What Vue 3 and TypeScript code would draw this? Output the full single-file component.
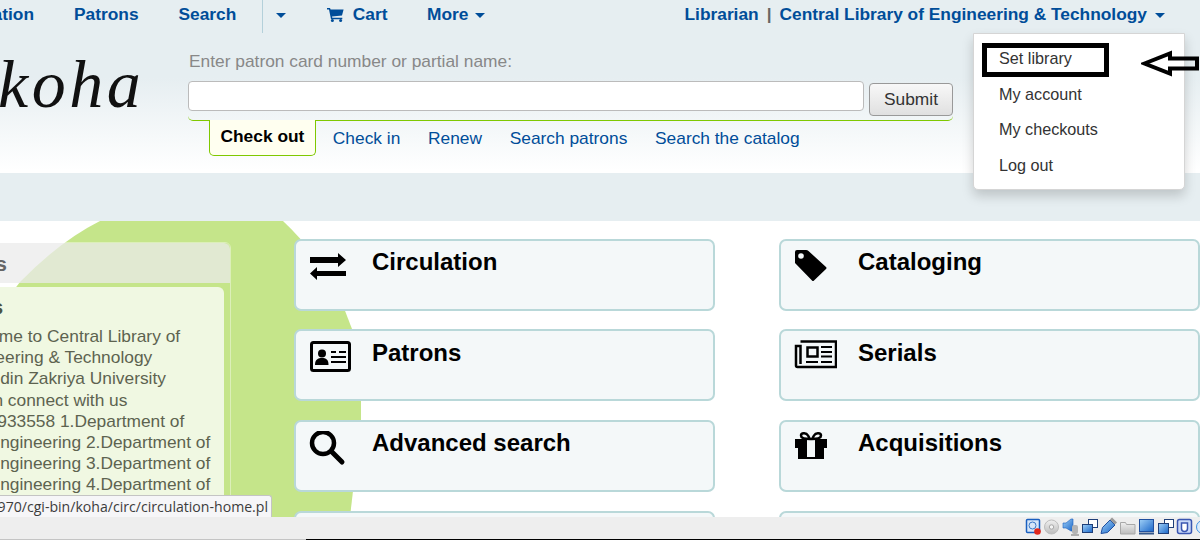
<template>
  <div class="page">
    <nav class="topnav">
      <div class="nav-left">
        <a class="nav-link">Circulation</a>
        <a class="nav-link">Patrons</a>
        <a class="nav-link">Search</a>
        <span class="nav-sep"></span>
        <span class="caret caret-search"></span>
        <a class="nav-link nav-cart">
          <svg width="17" height="15" viewBox="0 0 17 15">
            <path d="M0 1h3l.6 1.600H16.600L15 8.600 5 9.600l.3 1.200h10v1.400H4L2 2.400H0z" fill="#004d99" />
            <circle cx="5.400" cy="13.400" r="1.500" fill="#004d99" />
            <circle cx="13.600" cy="13.400" r="1.500" fill="#004d99" />
          </svg>
          Cart
        </a>
        <a class="nav-link">More<span class="caret caret-inline"></span></a>
      </div>
      <div class="nav-right">
        <a class="nav-link">Librarian</a>
        <span class="nav-pipe">|</span>
        <a class="nav-link">Central Library of Engineering &amp; Technology</a>
        <span class="caret caret-user"></span>
      </div>
    </nav>

    <header class="masthead">
      <div class="logo">koha</div>
      <div class="search-area">
        <label class="search-label">Enter patron card number or partial name:</label>
        <div class="search-row">
          <input class="search-input" type="text" />
          <button class="submit-btn">Submit</button>
        </div>
        <div class="tabs">
          <a class="tab tab-active">Check out</a>
          <a v-for="t in tabs" :key="t" class="tab">{{ t }}</a>
        </div>
      </div>
    </header>

    <div class="band"></div>

    <main class="main">
      <svg class="blob" width="361" height="296" viewBox="0 0 361 296">
        <path d="M100 0H283Q330 44 352 108L361 180V199L353 270L350 296H0V87L20 61Q60 20 100 0Z" fill="#c5e58a" />
      </svg>
      <aside class="news">
        <h3 class="news-head">News</h3>
        <div class="news-box">
          <h4 class="news-title">News</h4>
          <div v-for="l in newsLines" :key="l" class="news-line">{{ l }}</div>
        </div>
      </aside>
      <div class="cards">
        <a v-for="c in cards" :key="c.title" class="card">
          <span class="card-icon">
            <svg v-if="c.icon === 'exchange'" width="44" height="36" viewBox="0 0 44 36">
              <path d="M2 7H30V3L38 10 30 17V13H2ZM38 21V26H9V30L2 23.500 9 17V21Z" fill="#000" />
            </svg>
            <svg v-else-if="c.icon === 'idcard'" width="44" height="36" viewBox="0 0 44 36">
              <rect x="3.500" y="2.500" width="38" height="28" rx="2" fill="none" stroke="#000" stroke-width="3" />
              <circle cx="14" cy="13.500" r="4" fill="#000" />
              <path d="M7 25c0-5.500 3-7 7-7s6.500 1.500 6.500 7z" fill="#000" />
              <path d="M23 12h5M31 12h7M23 17h15M23 22h15" stroke="#000" stroke-width="2" />
            </svg>
            <svg v-else-if="c.icon === 'search'" width="44" height="36" viewBox="0 0 44 36">
              <circle cx="15" cy="12" r="11" fill="none" stroke="#000" stroke-width="4.500" />
              <path d="M24 21l10 10" stroke="#000" stroke-width="5" stroke-linecap="round" />
            </svg>
            <svg v-else-if="c.icon === 'tag'" width="44" height="36" viewBox="0 0 44 36">
              <path d="M2 2q0-2 2-2h9q1.500 0 2.500 1L33 17q1 1 0 2L21 30.500q-1 1-2 0L2 13z" fill="#000" />
              <circle cx="8" cy="6" r="2.800" fill="#f4f8f9" />
            </svg>
            <svg v-else-if="c.icon === 'news'" width="44" height="36" viewBox="0 0 44 36">
              <path d="M7.500 1.500H43V27H4.500a1.500 1.500 0 0 1-1.500-1.500V6H7.500V24" fill="none" stroke="#000" stroke-width="2.500" />
              <rect x="14.500" y="7.500" width="10" height="9" fill="none" stroke="#000" stroke-width="2.500" />
              <path d="M28 7h11M28 12h11M28 16.500h11M13 22h12M28 22h11" stroke="#000" stroke-width="2" />
            </svg>
            <svg v-else width="44" height="36" viewBox="0 0 44 36">
              <path d="M2 8H34V17H31V28H5V17H2Z" fill="#000" />
              <rect x="14" y="9" width="8" height="17" fill="#f4f8f9" />
              <path d="M17 8c-6 0-9-1-9-3.500S13 1 15 4.500zM19 8c6 0 9-1 9-3.500S23 1 21 4.500z" fill="none" stroke="#000" stroke-width="2.500" />
            </svg>
          </span>
          <span class="card-title">{{ c.title }}</span>
        </a>
      </div>
    </main>

    <div class="status-url"><span>970/cgi-bin/koha/circ/circulation-home.pl</span></div>

    <footer class="vbox-bar">
      <svg width="175" height="22" viewBox="0 0 175 22">
        <defs>
          <linearGradient id="blue" x1="0" y1="0" x2="1" y2="1">
            <stop offset="0" stop-color="#9fd0f7" />
            <stop offset="1" stop-color="#1a66c8" />
          </linearGradient>
          <linearGradient id="grey" x1="0" y1="0" x2="0" y2="1">
            <stop offset="0" stop-color="#f0f0f0" />
            <stop offset="1" stop-color="#bcbcbc" />
          </linearGradient>
        </defs>
        <rect x="1.500" y="2.500" width="13" height="13" rx="1" fill="#d6e6f8" stroke="#1a5fc0" stroke-width="1.500" />
        <circle cx="7.500" cy="8.500" r="3.500" fill="none" stroke="#3a78c8" />
        <circle cx="12.500" cy="14.500" r="3.300" fill="#e0261a" />
        <circle cx="26.500" cy="10" r="7" fill="url(#grey)" stroke="#bdbdbd" />
        <circle cx="26.500" cy="10" r="2.200" fill="#f4f4f4" stroke="#a8a8a8" />
        <path d="M38 6h3l5-4h2v12h-2l-5-3h-3z" fill="url(#blue)" stroke="#1a5fc0" stroke-width=".600" />
        <rect x="47" y="8" width="6" height="9" rx="2" fill="#b4b4b4" />
        <path d="M46 18h8" stroke="#999" stroke-width="1.500" />
        <rect x="63.500" y="2.500" width="9" height="8" fill="#fff" stroke="#1f3f78" />
        <rect x="57.500" y="7.500" width="10" height="8" fill="url(#blue)" stroke="#1f3f78" />
        <path d="M76 16.500l1.500-6L85 3l5 5-7.500 7.500z" fill="url(#blue)" stroke="#1f4f9f" />
        <path d="M86 1.500l5 5" stroke="#9a9a9a" stroke-width="3" />
        <path d="M95.500 5.500h5l1 2h8.500v9.500H95.500z" fill="url(#grey)" stroke="#a8a8a8" />
        <rect x="114.500" y="2.500" width="14" height="12" fill="url(#blue)" stroke="#1f4f9f" />
        <path d="M114 16.500h15" stroke="#34578a" stroke-width="2" />
        <rect x="139.500" y="2.500" width="9" height="8" fill="#fff" stroke="#1f3f78" />
        <rect x="133.500" y="6.500" width="10" height="10" fill="url(#blue)" stroke="#1f3f78" />
        <rect x="152.500" y="2.500" width="14" height="14" rx="2" fill="#c8d8f8" stroke="#3a55b0" stroke-width="1.500" />
        <path d="M156.500 6v5.500a3 3 0 0 0 6 0V6z" fill="#fff" stroke="#3a55b0" stroke-width="1.500" />
        <circle cx="178" cy="10" r="6.500" fill="#dcecfb" stroke="#3f8fe0" />
      </svg>
      <div class="vbox-line"></div>
    </footer>

    <div class="menu">
      <a v-for="m in menu" :key="m" class="menu-item">{{ m }}</a>
    </div>
    <div class="mark-box"></div>
    <svg class="mark-arrow" width="58" height="28" viewBox="0 0 58 28">
      <path d="M3.500 13.500L29 3.500V8.500H56V18.500H29V23.500Z" fill="none" stroke="#000" stroke-width="4" />
    </svg>
  </div>
</template>

<script setup lang="ts">
const tabs: string[] = ["Check in", "Renew", "Search patrons", "Search the catalog"];
const menu: string[] = ["Set library", "My account", "My checkouts", "Log out"];

const newsLines: string[] = [
  "Welcome to Central Library of",
  "Engineering & Technology",
  "Salah din Zakriya University",
  "Or can connect with us",
  "Tel:98933558 1.Department of",
  "Civil Engineering 2.Department of",
  "Civil Engineering 3.Department of",
  "Civil Engineering 4.Department of",
];

const cards: { title: string; icon: string }[] = [
  { title: "Circulation", icon: "exchange" },
  { title: "Cataloging", icon: "tag" },
  { title: "Patrons", icon: "idcard" },
  { title: "Serials", icon: "news" },
  { title: "Advanced search", icon: "search" },
  { title: "Acquisitions", icon: "gift" },
  { title: "", icon: "" },
  { title: " ", icon: "" },
];
</script>

<style>
html,
body {
  margin: 0;
  overflow: hidden;
}
</style>

<style scoped>
.page {
  position: relative;
  width: 1200px;
  height: 540px;
  overflow: hidden;
  display: flex;
  flex-direction: column;
  background: #fff;
  font-family: "Liberation Sans", Arial, sans-serif;
}

.topnav {
  flex: none;
  height: 37px;
  display: flex;
  justify-content: space-between;
  background: #e6eef1;
  font-size: 17.330px;
  font-weight: 700;
  color: #004d99;
}

.nav-left {
  display: flex;
  align-items: flex-start;
  margin-left: -56.500px;
}

.nav-link {
  display: inline-flex;
  align-items: center;
  height: 29px;
  margin-right: 40px;
  white-space: nowrap;
}

.nav-right {
  display: flex;
  align-items: flex-start;
  margin-right: 35px;
}

.nav-right .nav-link {
  margin-right: 0;
}

.nav-pipe {
  height: 29px;
  line-height: 29px;
  margin: 0 8px;
  color: #666;
}

.nav-sep {
  width: 1px;
  height: 33px;
  margin-left: -14px;
  background: #b4d0da;
}

.caret {
  display: inline-block;
  width: 0;
  height: 0;
  border-left: 5.500px solid transparent;
  border-right: 5.500px solid transparent;
  border-top: 5px solid #004d99;
}

.caret-search {
  margin: 13px 41px 0 13px;
}

.caret-inline {
  margin-left: 7px;
  margin-top: 2px;
}

.caret-user {
  margin: 13px 0 0 8px;
}

.nav-cart {
  margin-right: 39.500px;
}

.nav-cart svg {
  margin-right: 8.500px;
}

.masthead {
  flex: none;
  height: 136px;
  display: flex;
  background: linear-gradient(#e6eef1 0, #e6eef1 30%, #fff 98%);
}

.logo {
  width: 188px;
  margin-left: -2px;
  margin-right: 2px;
  font-family: "Liberation Serif", serif;
  font-style: italic;
  font-size: 68px;
  letter-spacing: 3.500px;
  line-height: 76px;
  padding-top: 9px;
  color: #111;
}

.search-area {
  width: 765px;
}

.search-label {
  display: block;
  margin: 15px 0 0 1px;
  font-size: 17.350px;
  line-height: 19px;
  color: #888;
}

.search-row {
  display: flex;
  margin-top: 10px;
  height: 39px;
  border-bottom: 1px solid #7fc800;
  border-radius: 0 0 5px 5px;
}

.search-input {
  box-sizing: border-box;
  width: 676px;
  height: 30px;
  padding: 0;
  border: 1px solid #bbb;
  border-radius: 4px;
  background: #fff;
}

.submit-btn {
  box-sizing: border-box;
  width: 84px;
  height: 33px;
  margin: 2px 0 0 5px;
  padding: 0;
  border: 1px solid #999;
  border-radius: 4px;
  background: linear-gradient(#f8f8f8, #e0e0e0);
  font-family: inherit;
  font-size: 17.350px;
  color: #333;
}

.tabs {
  display: flex;
  align-items: flex-start;
  margin: -1px 0 0 21px;
}

.tab {
  margin-right: 27.700px;
  margin-top: 8px;
  line-height: 20px;
  font-size: 17.350px;
  color: #004d99;
  white-space: nowrap;
}

.tab-active {
  box-sizing: border-box;
  height: 36px;
  margin-top: 0;
  margin-right: 17px;
  padding: 6px 10.500px;
  border: 1px solid #7fc800;
  border-top: none;
  border-radius: 0 0 5px 5px;
  background: #fffff0;
  font-weight: 700;
  color: #000;
}

.band {
  flex: none;
  height: 48px;
  background: #e6eef1;
}

.main {
  position: relative;
  flex: 1;
  min-height: 0;
  overflow: hidden;
  display: flex;
  padding-top: 17.600px;
  box-sizing: border-box;
}

.blob {
  position: absolute;
  left: 0;
  top: 0;
}

.news {
  position: relative;
  flex: none;
  width: 283px;
  margin: 3.400px 63px 0 -52px;
  border: 1px solid rgba(255, 255, 255, 0.4);
  border-radius: 6px 6px 0 0;
  box-sizing: border-box;
}

.news-head {
  margin: 0;
  height: 40px;
  padding-left: 3px;
  line-height: 42px;
  font-size: 21px;
  color: #666;
  background: rgba(235, 235, 235, 0.74);
  border-radius: 6px 6px 0 0;
}

.news-box {
  margin: 4px 6px 0 0;
  padding: 10px 0 0 2px;
  height: 300px;
  border-radius: 6px;
  background: #f0f8e2;
  color: #5d6350;
  font-size: 17.350px;
  line-height: 21.150px;
}

.news-title {
  margin: 0 0 8px;
  font-size: 20px;
  color: #4d5340;
}

.news-line {
  white-space: nowrap;
}

.cards {
  position: relative;
  flex: none;
  display: grid;
  grid-template-columns: 421px 421px;
  column-gap: 64px;
  row-gap: 18.800px;
  grid-auto-rows: 72px;
}

.card {
  box-sizing: border-box;
  display: flex;
  border: 2px solid #b9d8d9;
  border-radius: 7px;
  background: #f4f8f9;
}

.card-icon {
  width: 76px;
  flex: none;
  padding: 9px 0 0 12px;
  box-sizing: border-box;
}

.card:nth-child(even) .card-icon {
  width: 77px;
}

.card-title {
  font-size: 24px;
  font-weight: 700;
  line-height: 28px;
  margin-top: 7px;
  color: #000;
}

.card:nth-child(3) .card-title,
.card:nth-child(4) .card-title {
  margin-top: 8px;
}

.status-url {
  position: absolute;
  left: 0;
  top: 495px;
  width: 272px;
  height: 22px;
  box-sizing: border-box;
  display: flex;
  justify-content: flex-end;
  overflow: hidden;
  padding-right: 3px;
  background: #f6f6f8;
  border: 1px solid #c4c4c4;
  border-left: none;
  border-bottom: none;
  border-radius: 0 3px 0 0;
  font-family: "Open Sans", sans-serif;
  font-size: 14.100px;
  line-height: 21px;
  color: #3c3c3c;
  white-space: nowrap;
}

.vbox-bar {
  position: relative;
  flex: none;
  height: 23px;
  display: flex;
  justify-content: flex-end;
  align-items: flex-start;
  background: #eeeeee;
}

.vbox-line {
  position: absolute;
  left: 0;
  right: 0;
  bottom: 0;
  height: 1px;
  background: linear-gradient(to right, #c4c4c4 306px, #000 306px);
}

.menu {
  position: absolute;
  left: 973px;
  top: 33px;
  box-sizing: border-box;
  width: 212px;
  height: 157px;
  padding-top: 7px;
  background: #fff;
  border: 1px solid #d5d5d5;
  border-radius: 0 0 5px 5px;
  box-shadow: 0 6px 12px rgba(0, 0, 0, 0.175);
}

.menu-item {
  display: block;
  height: 35.600px;
  padding-left: 25px;
  font-size: 16.200px;
  line-height: 34px;
  color: #333;
}

.mark-box {
  position: absolute;
  left: 982px;
  top: 43px;
  width: 127px;
  height: 34px;
  box-sizing: border-box;
  border: 5px solid #000;
}

.mark-arrow {
  position: absolute;
  left: 1141px;
  top: 50px;
}
</style>
